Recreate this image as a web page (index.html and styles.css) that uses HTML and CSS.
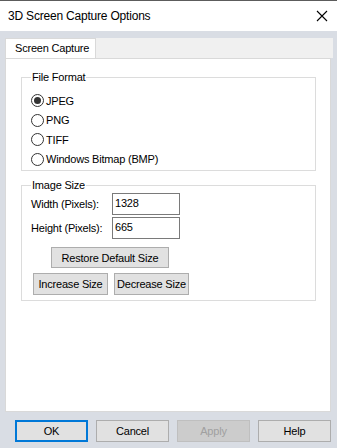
FILE: index.html
```html
<!DOCTYPE html>
<html lang="en">
<head>
  <meta charset="UTF-8" />
  <title>3D Screen Capture Options</title>
  <link rel="stylesheet" href="styles.css">
</head>
<body>
  <div class="dialog">
    <div class="title-bar">
      <span class="title">3D Screen Capture Options</span>
      <svg class="close" width="12" height="12" viewBox="0 0 12 12">
        <path d="M1 1 L11 11 M11 1 L1 11" stroke="#000" stroke-width="1.1" fill="none" />
      </svg>
    </div>

    <div class="client">
      <div class="tabs">
        <div class="tab">Screen Capture</div>
        <div class="tab-strip"></div>
      </div>

      <div class="panel">
        <fieldset class="group formats">
          <legend>File Format</legend>
          <label class="radio checked"><span class="dot"></span>JPEG</label>
          <label class="radio"><span class="dot"></span>PNG</label>
          <label class="radio"><span class="dot"></span>TIFF</label>
          <label class="radio"><span class="dot"></span>Windows Bitmap (BMP)</label>
        </fieldset>

        <fieldset class="group size">
          <legend>Image Size</legend>
          <div class="field">
            <span class="field-label">Width (Pixels):</span>
            <input type="text" value="1328" />
          </div>
          <div class="field">
            <span class="field-label">Height (Pixels):</span>
            <input type="text" value="665" />
          </div>
          <div class="restore-row">
            <button class="btn restore">Restore Default Size</button>
          </div>
          <div class="resize-row">
            <button class="btn resize">Increase Size</button>
            <button class="btn resize">Decrease Size</button>
          </div>
        </fieldset>
      </div>

      <div class="actions">
        <button class="btn action default">OK</button>
        <button class="btn action">Cancel</button>
        <button class="btn action" disabled>Apply</button>
        <button class="btn action">Help</button>
      </div>
    </div>
  </div>
</body>
</html>
```

FILE: styles.css
```css
* {
  box-sizing: border-box;
}

body {
  margin: 0;
  font-family: 'Liberation Sans', Arial, sans-serif;
  font-size: 11px;
  letter-spacing: -0.2px;
  color: #000;
  background: #d9dde4;
}

.dialog {
  width: 337px;
  height: 448px;
  display: flex;
  flex-direction: column;
}

.title-bar {
  height: 31px;
  background: #fff;
  border-top: 1px solid #5c5c5c;
  display: flex;
  align-items: center;
  padding: 0 9px 0 8px;
}

.title {
  font-size: 12px;
  flex: 1;
}

.close {
  display: block;
}

.client {
  flex: 1;
  padding: 7px 6px 0 5px;
  display: flex;
  flex-direction: column;
}

.tabs {
  display: flex;
  height: 20px;
}

.tab {
  width: 91px;
  background: #fff;
  border: 1px solid #d9d9d9;
  border-bottom: none;
  padding: 3px 0 0 9px;
  font-size: 11px;
}

.tab-strip {
  flex: 1;
  background: #f0f0f0;
  margin-right: -2px;
}

.panel {
  height: 354px;
  background: #fff;
  border: 1px solid #d9d9d9;
  padding: 12px 14px 0 15px;
}

.group {
  margin: 0;
  border: 1px solid #dcdcdc;
  padding: 0 8px 0 9px;
}

.group legend {
  padding: 0 1px;
  line-height: 13px;
}

.formats {
  padding-top: 7px;
  padding-bottom: 1px;
}

.radio {
  display: flex;
  align-items: center;
  height: 19.5px;
}

.dot {
  width: 13px;
  height: 13px;
  border: 1px solid #333;
  border-radius: 50%;
  margin-right: 2px;
  display: flex;
  align-items: center;
  justify-content: center;
}

.checked .dot::after {
  content: "";
  width: 7px;
  height: 7px;
  border-radius: 50%;
  background: #333;
}

.size {
  margin-top: 8px;
  padding-top: 1px;
  padding-bottom: 5px;
}

.field {
  display: flex;
  align-items: center;
  height: 22px;
  margin-bottom: 2px;
}

.field-label {
  width: 81px;
}

.field input {
  width: 68px;
  height: 22px;
  border: 1px solid #7a7a7a;
  padding: 0 0 3px 2px;
  font-family: inherit;
  font-size: 11px;
  letter-spacing: inherit;
  outline: none;
}

.btn {
  font-family: inherit;
  font-size: 11px;
  letter-spacing: inherit;
  color: #000;
  background: #e1e1e1;
  border: 1px solid #adadad;
  padding: 0;
  height: 22px;
}

.restore-row {
  padding: 6px 0 0 20px;
}

.restore {
  width: 118px;
  height: 21px;
}

.resize-row {
  display: flex;
  gap: 6px;
  padding: 5px 0 0 2px;
}

.resize {
  width: 75px;
}

.actions {
  display: flex;
  gap: 8px;
  padding: 8px 0 0 10px;
}

.action {
  width: 73px;
}

.action.default {
  border: 2px solid #0078d7;
}

.action:disabled {
  background: #cccccc;
  border-color: #bfbfbf;
  color: #a0a0a0;
}
```
